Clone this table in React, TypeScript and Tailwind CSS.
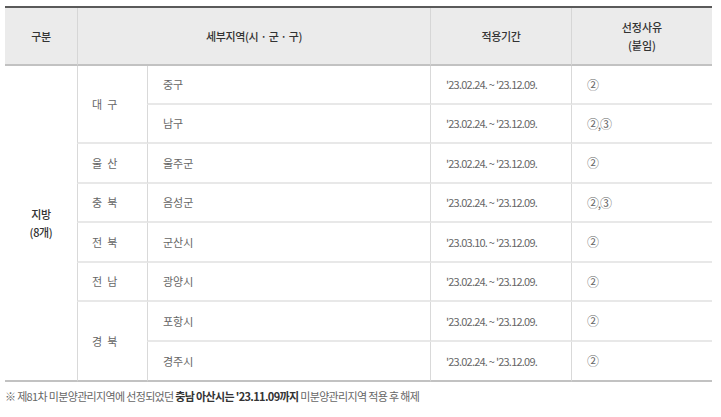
import React from "react";

type Row = {
  region?: string;
  span?: number;
  district: string;
  period: string;
  reason: string;
  h: string;
};

const rows: Row[] = [
  { region: "대 구", span: 2, district: "중구", period: "'23.02.24. ~ '23.12.09.", reason: "②", h: "h-[39px]" },
  { district: "남구", period: "'23.02.24. ~ '23.12.09.", reason: "②,③", h: "h-[39px]" },
  { region: "울 산", span: 1, district: "울주군", period: "'23.02.24. ~ '23.12.09.", reason: "②", h: "h-[40px]" },
  { region: "충 북", span: 1, district: "음성군", period: "'23.02.24. ~ '23.12.09.", reason: "②,③", h: "h-[39px]" },
  { region: "전 북", span: 1, district: "군산시", period: "'23.03.10. ~ '23.12.09.", reason: "②", h: "h-[40px]" },
  { region: "전 남", span: 1, district: "광양시", period: "'23.02.24. ~ '23.12.09.", reason: "②", h: "h-[39px]" },
  { region: "경 북", span: 2, district: "포항시", period: "'23.02.24. ~ '23.12.09.", reason: "②", h: "h-[40px]" },
  { district: "경주시", period: "'23.02.24. ~ '23.12.09.", reason: "②", h: "h-[40px]" },
];

export default function App() {
  const last = rows.length - 1;
  return (
    <div className="min-h-[417px] w-[721px] bg-white pl-[5px] pt-[6px] font-['Noto_Sans_CJK_KR','Noto_Sans',sans-serif] text-[11px] text-[#666]">
      <table className="w-[707px] table-fixed border-separate border-spacing-0 border-t-2 border-[#5a5a5a]">
        <colgroup>
          <col className="w-[72px]" />
          <col className="w-[70px]" />
          <col className="w-[283px]" />
          <col className="w-[141px]" />
          <col className="w-[141px]" />
        </colgroup>
        <thead>
          <tr className="h-[58px]">
            {["구분", "세부지역(시 · 군 · 구)", "적용기간"].map((t, i) => (
              <th
                key={t}
                colSpan={i === 1 ? 2 : 1}
                className={`border-b-2 border-b-[#c2c2c2] bg-[#ebebeb] text-center font-medium tracking-[-0.03em] text-[#333] ${i > 0 ? "border-l border-l-[#d6d6d6]" : ""}`}
              >
                {t}
              </th>
            ))}
            <th className="border-b-2 border-l border-b-[#c2c2c2] border-l-[#d6d6d6] bg-[#ebebeb] text-center font-medium leading-[18px] text-[#333]">
              선정사유
              <br />
              (붙임)
            </th>
          </tr>
        </thead>
        <tbody>
          {rows.map((r, i) => {
            const bottom = i === last ? "border-b-2 border-b-[#c2c2c2]" : "border-b-2 border-b-[#e8e8e8]";
            const regionBottom =
              i + (r.span ?? 1) - 1 === last ? "border-b-2 border-b-[#c2c2c2]" : "border-b-2 border-b-[#e8e8e8]";
            return (
              <tr key={r.district} className={r.h}>
                {i === 0 && (
                  <td
                    rowSpan={rows.length}
                    className="border-b-2 border-b-[#c2c2c2] text-center font-medium leading-[18px] tracking-[-0.03em] text-[#333]"
                  >
                    지방
                    <br />
                    (8개)
                  </td>
                )}
                {r.region && (
                  <td rowSpan={r.span} className={`border-l border-l-[#d9d9d9] pl-[14px] tracking-[0.12em] ${regionBottom}`}>
                    {r.region}
                  </td>
                )}
                <td className={`border-l border-l-[#d9d9d9] pl-[15px] ${bottom}`}>{r.district}</td>
                <td className={`border-l border-l-[#d9d9d9] pl-[15px] tracking-[-0.07em] ${bottom}`}>{r.period}</td>
                <td className={`border-l border-l-[#d9d9d9] pl-[15px] text-[12px] tracking-[-0.1em] ${bottom}`}>{r.reason}</td>
              </tr>
            );
          })}
        </tbody>
      </table>
      <p className="mt-[6px] text-[11px] tracking-[-0.06em] text-[#666]">
        ※ 제81차 미분양관리지역에 선정되었던{" "}
        <b className="font-bold text-[#333]">충남 아산시는 '23.11.09까지</b> 미분양관리지역 적용 후 해제
      </p>
    </div>
  );
}
